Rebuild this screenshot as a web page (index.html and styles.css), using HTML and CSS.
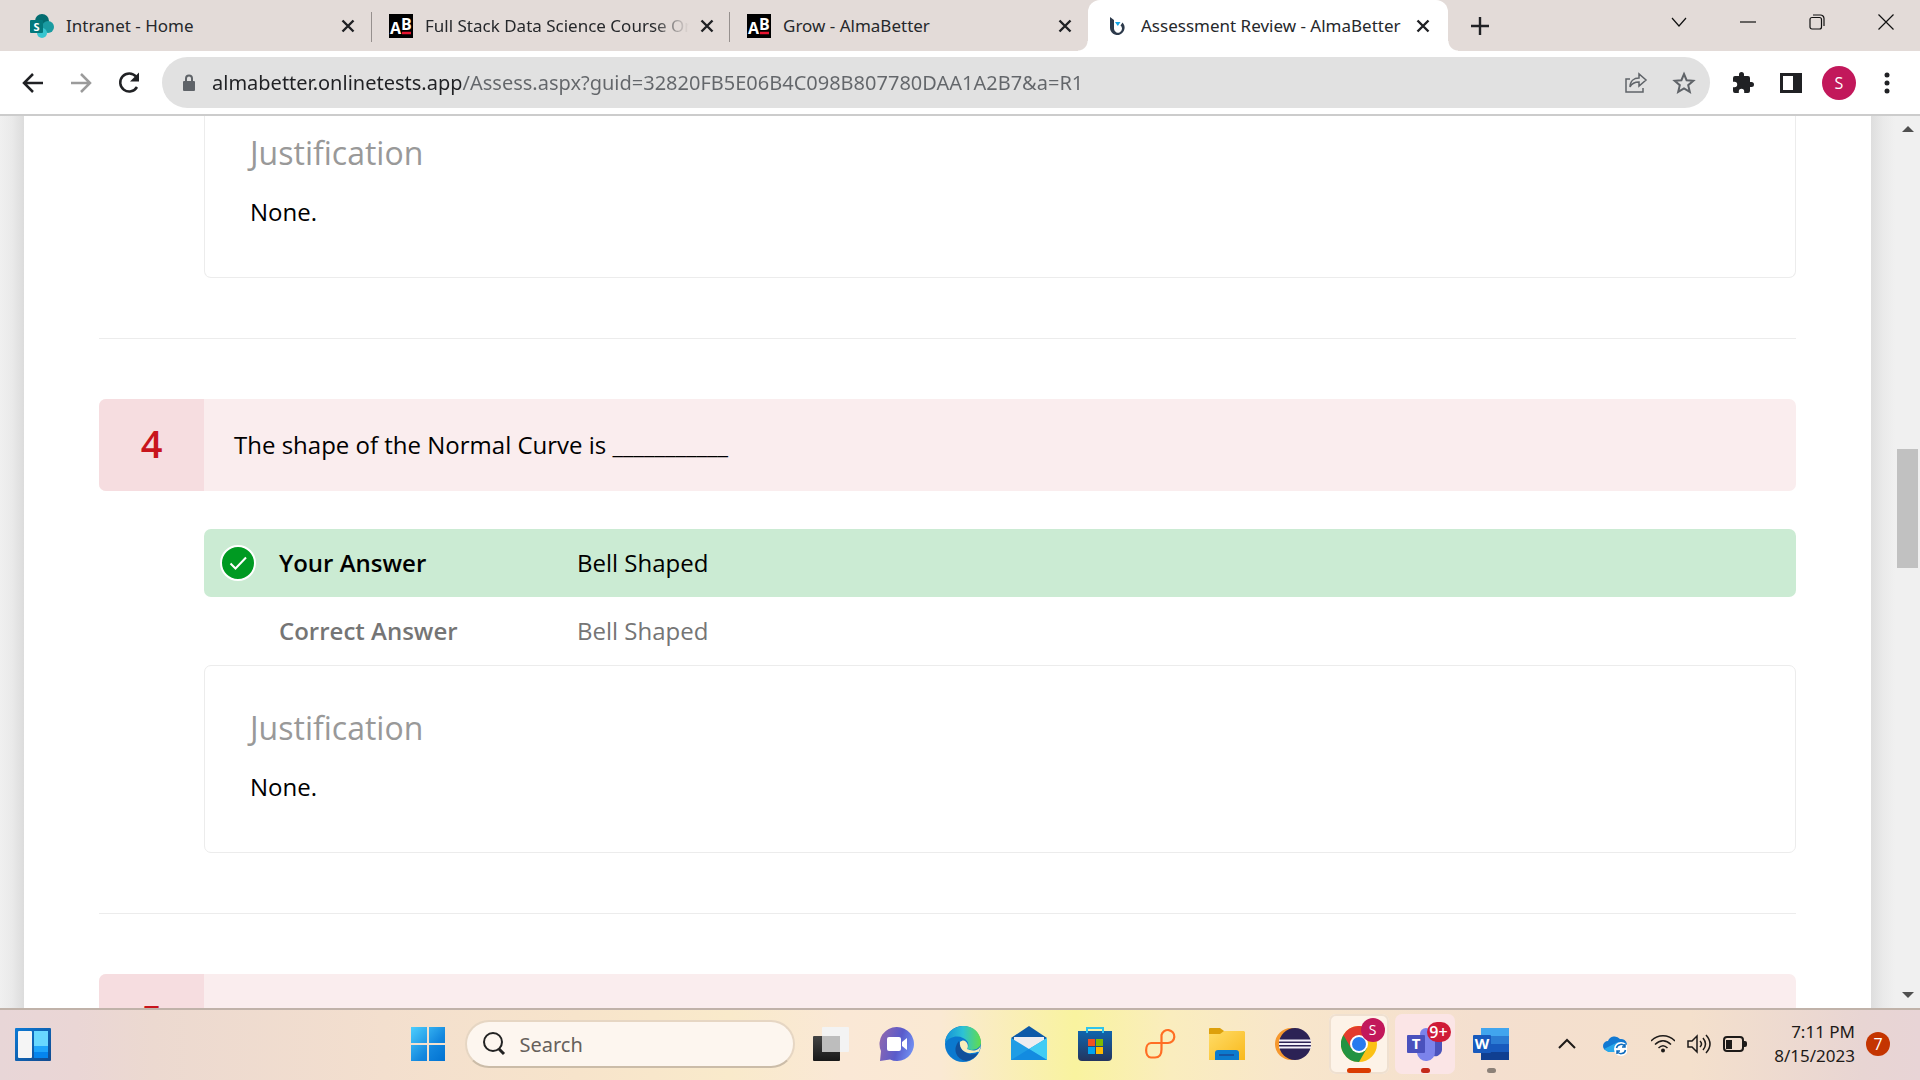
FILE: index.html
```
<!DOCTYPE html>
<html lang="en">
<head>
<meta charset="utf-8">
<title>Assessment Review - AlmaBetter</title>
<link rel="stylesheet" href="styles.css">
</head>
<body>
<div class="desktop">
  <header class="tabstrip">
    <div class="tab">
      <svg class="favicon" viewBox="0 0 24 24"><circle cx="12" cy="7" r="7" fill="#036c70"/><circle cx="18" cy="13" r="6" fill="#1a9ba1"/><circle cx="12" cy="19" r="5" fill="#37c6d0"/><rect y="6" width="13" height="13" rx="1" fill="#03787c"/><text x="6.500" y="16.500" text-anchor="middle" class="glyph glyph-s">S</text></svg>
      <span class="tab-title">Intranet - Home</span>
      <button class="tab-close" aria-label="Close tab"><svg viewBox="0 0 14 14"><path d="M1.500 1.500l11 11M12.500 1.500l-11 11"/></svg></button>
    </div>
    <div class="tab divided">
      <svg class="favicon" viewBox="0 0 24 24"><rect width="24" height="24" fill="#000"/><text x="1" y="20" class="glyph glyph-ab">A</text><text x="12" y="16" class="glyph glyph-ab">B</text><path d="M13 19h9" stroke="#e8132f" stroke-width="2.500"/></svg>
      <span class="tab-title faded">Full Stack Data Science Course Online</span>
      <button class="tab-close" aria-label="Close tab"><svg viewBox="0 0 14 14"><path d="M1.500 1.500l11 11M12.500 1.500l-11 11"/></svg></button>
    </div>
    <div class="tab divided">
      <svg class="favicon" viewBox="0 0 24 24"><rect width="24" height="24" fill="#000"/><text x="1" y="20" class="glyph glyph-ab">A</text><text x="12" y="16" class="glyph glyph-ab">B</text><path d="M13 19h9" stroke="#e8132f" stroke-width="2.500"/></svg>
      <span class="tab-title">Grow - AlmaBetter</span>
      <button class="tab-close" aria-label="Close tab"><svg viewBox="0 0 14 14"><path d="M1.500 1.500l11 11M12.500 1.500l-11 11"/></svg></button>
    </div>
    <div class="tab active">
      <svg class="favicon" viewBox="0 0 24 24"><path d="M5 3l4 3v9a4 4 0 1 0 6.500-3.500l2-3a7.300 7.300 0 1 1-12.500 5z" fill="#2d3a4b"/><path d="M10 8h5.500l-2.700 4z" fill="#12a5e8"/></svg>
      <span class="tab-title">Assessment Review - AlmaBetter</span>
      <button class="tab-close" aria-label="Close tab"><svg viewBox="0 0 14 14"><path d="M1.500 1.500l11 11M12.500 1.500l-11 11"/></svg></button>
    </div>
    <button class="new-tab" aria-label="New tab"><svg viewBox="0 0 18 18"><path d="M9 0v18M0 9h18"/></svg></button>
    <div class="window-buttons">
      <button aria-label="Search tabs"><svg viewBox="0 0 16 16"><path d="M1 4l7 8 7-8"/></svg></button>
      <button aria-label="Minimize"><svg viewBox="0 0 16 16"><path d="M0 8h16"/></svg></button>
      <button aria-label="Restore"><svg viewBox="0 0 16 16"><rect x="1" y="3.500" width="11.500" height="11.500" rx="2"/><path d="M4 1h7.500a3.500 3.500 0 0 1 3.500 3.500v7.500"/></svg></button>
      <button aria-label="Close"><svg viewBox="0 0 16 16"><path d="M.5.5l15 15M15.500.5l-15 15"/></svg></button>
    </div>
  </header>

  <nav class="toolbar">
    <button class="tool" aria-label="Back"><svg viewBox="0 0 24 24"><path d="M22 12H3M12 3l-9 9 9 9" class="line"/></svg></button>
    <button class="tool muted" aria-label="Forward"><svg viewBox="0 0 24 24"><path d="M2 12h19M12 3l9 9-9 9" class="line"/></svg></button>
    <button class="tool" aria-label="Reload"><svg viewBox="0 0 24 24"><path d="M20 16a9 9 0 1 1-1-10.500" class="line"/><path d="M22 1.500v9h-9z"/></svg></button>
    <div class="omnibox">
      <svg class="lock" viewBox="0 0 14 18"><rect x="1" y="7" width="12" height="10" rx="1" fill="#5f6368"/><path d="M4 8V4.500a3 3 0 0 1 6 0V8" fill="none" stroke="#5f6368" stroke-width="2"/></svg>
      <input class="url" type="text" aria-label="Address" value="almabetter.onlinetests.app/Assess.aspx?guid=32820FB5E06B4C098B807780DAA1A2B7&amp;a=R1">
      <button class="tool gray" aria-label="Share"><svg viewBox="0 0 24 24"><path d="M6 8H2v13h17v-4M6 16c0-6 4-9 9-9V3l7 6-7 6v-4c-4 0-7 1-9 5z" class="thin"/></svg></button>
      <button class="tool gray" aria-label="Bookmark"><svg viewBox="0 0 24 24"><path d="M12 3l2.600 6.200 6.700.6-5.100 4.400 1.600 6.600L12 17.300l-5.800 3.500 1.600-6.600-5.100-4.400 6.700-.6z" class="mid"/></svg></button>
    </div>
    <button class="tool" aria-label="Extensions"><svg viewBox="0 0 24 24"><path d="M20.500 11H19V7a2 2 0 0 0-2-2h-4V3.500a2.500 2.500 0 0 0-5 0V5H4a2 2 0 0 0-2 2v3.800h1.500a2.700 2.700 0 0 1 0 5.400H2V20a2 2 0 0 0 2 2h3.800v-1.500a2.700 2.700 0 0 1 5.400 0V22H17a2 2 0 0 0 2-2v-4h1.500a2.500 2.500 0 0 0 0-5z"/></svg></button>
    <button class="tool" aria-label="Side panel"><svg viewBox="0 0 24 24"><path d="M1 2h22v20H1zM4 5v14h10V5z" fill-rule="evenodd"/></svg></button>
    <button class="avatar" aria-label="Profile">S</button>
    <button class="tool" aria-label="Menu"><svg viewBox="0 0 24 24"><circle cx="12" cy="4" r="2.500"/><circle cx="12" cy="12" r="2.500"/><circle cx="12" cy="20" r="2.500"/></svg></button>
  </nav>

  <div class="viewport">
    <div class="gutter left"></div>
    <main class="sheet">
      <section class="question">
        <div class="justification continued">
          <h2>Justification</h2>
          <p>None.</p>
        </div>
      </section>
      <hr>
      <section class="question">
        <div class="prompt">
          <span class="number">4</span>
          <p class="prompt-text">The shape of the Normal Curve is ___________</p>
        </div>
        <dl class="answers">
          <div class="answer correct">
            <svg class="check" viewBox="0 0 36 36"><circle cx="18" cy="18" r="17" fill="#009a22" stroke="#fff" stroke-width="2"/><path d="M10.500 18.500l5 5 10.500-11" fill="none" stroke="#fff" stroke-width="2"/></svg>
            <dt>Your Answer</dt>
            <dd>Bell Shaped</dd>
          </div>
          <div class="answer">
            <dt>Correct Answer</dt>
            <dd>Bell Shaped</dd>
          </div>
        </dl>
        <div class="justification">
          <h2>Justification</h2>
          <p>None.</p>
        </div>
      </section>
      <hr>
      <section class="question">
        <div class="prompt">
          <span class="number">5</span>
          <p class="prompt-text"></p>
        </div>
      </section>
    </main>
    <div class="gutter right"></div>
    <div class="scrollbar">
      <svg class="arrow" viewBox="0 0 12 6"><path d="M0 6l6-6 6 6z"/></svg>
      <div class="track"><div class="thumb"></div></div>
      <svg class="arrow" viewBox="0 0 12 6"><path d="M0 0l6 6 6-6z"/></svg>
    </div>
  </div>

  <footer class="taskbar">
    <div class="task-left">
      <button class="task" aria-label="Widgets"><svg viewBox="0 0 36 36"><defs><linearGradient id="wd" x2="1" y2="1"><stop stop-color="#0b7ad6"/><stop offset="1" stop-color="#124a8e"/></linearGradient></defs><rect y="2" width="36" height="33" rx="1" fill="url(#wd)"/><rect x="3" y="5" width="14" height="27" rx="1" fill="#f5f5f5"/><path d="M19 5h14v15H19z" fill="#68d8ff"/><path d="M19 20h14v6H19z" fill="#1ea5fb"/><path d="M19 26h14v6H19z" fill="#0585ee"/></svg></button>
    </div>
    <div class="task-center">
      <button class="task" aria-label="Start"><svg viewBox="0 0 36 36"><defs><linearGradient id="st" x2="36" y2="36" gradientUnits="userSpaceOnUse"><stop stop-color="#4fd2ff"/><stop offset=".6" stop-color="#1387de"/><stop offset="1" stop-color="#0070d0"/></linearGradient></defs><path d="M1 1h16v16H1zM19 1h16v16H19zM1 19h16v16H1zM19 19h16v16H19z" fill="url(#st)"/></svg></button>
      <label class="search">
        <svg viewBox="0 0 24 24"><circle cx="11" cy="10" r="9" fill="none" stroke="#222" stroke-width="2"/><path d="M17 17l5 5" stroke="#222" stroke-width="3"/></svg>
        <input type="text" placeholder="Search" aria-label="Search">
      </label>
      <button class="task" aria-label="Task view"><svg viewBox="0 0 36 36"><defs><linearGradient id="tv" x2="0" y2="1"><stop stop-color="#444"/><stop offset="1" stop-color="#181818"/></linearGradient></defs><rect y="10" width="27" height="25" rx="1" fill="url(#tv)"/><rect x="9" y="1" width="27" height="25" rx="1" fill="#f3f3f3"/><path d="M9 10h18v16H9z" fill="#bdbdbd"/></svg></button>
      <button class="task" aria-label="Chat"><svg viewBox="0 0 36 36"><defs><linearGradient id="ch" x1="0" x2="1" y1=".2" y2=".5"><stop stop-color="#9168ae"/><stop offset=".6" stop-color="#595bcb"/><stop offset="1" stop-color="#708df0"/></linearGradient></defs><path d="M18 1a17 17 0 1 1-7 32.500L1 35l1-10A17 17 0 0 1 18 1z" fill="url(#ch)"/><rect x="8" y="11" width="14" height="14" rx="2" fill="#fff"/><path d="M23 16l5-4v12l-5-4z" fill="#fff"/></svg></button>
      <button class="task" aria-label="Edge"><svg viewBox="0 0 36 36"><defs><linearGradient id="e1"><stop stop-color="#1591d8"/><stop offset=".5" stop-color="#2dc2d5"/><stop offset="1" stop-color="#62dc4b"/></linearGradient></defs><circle cx="18" cy="18" r="18" fill="#0b79cf"/><path d="M0 17C1-4 34-7 36 16c0 8-10 9-14 7 3-4 1-9-4-11-6-3-14-1-18 5z" fill="url(#e1)"/><path d="M14 15c-7 8-3 18 7 20 6-1 10-4 12-8-8 4-18-1-19-12z" fill="#11509b"/><path d="M15 16c-1 7 5 12 12 11 4 0 5-2 7-1l2-7c-2 7-10 6-14 4 3-4-2-12-7-7z" fill="#f9edbb"/></svg></button>
      <button class="task" aria-label="Mail"><svg viewBox="0 0 36 36"><path d="M0 12L18 0l18 12-18 14z" fill="#0c5aa8"/><path d="M3 11h30v8L18 28 3 19z" fill="#ededf0"/><path d="M0 12l18 11 18-11v22H0z" fill="#1f9de5"/><path d="M36 12v22L18 23z" fill="#40ccf4"/><path d="M0 34l18-11 18 11z" fill="#138be0"/></svg></button>
      <button class="task" aria-label="Store"><svg viewBox="0 0 36 36"><defs><linearGradient id="so" x2="0" y2="1"><stop stop-color="#1065ad"/><stop offset="1" stop-color="#24355e"/></linearGradient></defs><path d="M1 5h34v26a4 4 0 0 1-4 4H5a4 4 0 0 1-4-4z" fill="url(#so)"/><path d="M10 7V2h16v5" fill="none" stroke="#2fc4ec" stroke-width="2"/><path d="M11 13h7v7h-7z" fill="#f25022"/><path d="M19 13h7v7h-7z" fill="#7fba00"/><path d="M11 21h7v7h-7z" fill="#00a4ef"/><path d="M19 21h7v7h-7z" fill="#ffb900"/></svg></button>
      <button class="task" aria-label="Loop"><svg viewBox="0 0 36 36"><path d="M18.500 17V9a6.500 6.500 0 1 1 6.500 8H8c-6.500 0-6.500 14.500 0 14.500h4c5 0 6.500-3 6.500-8z" fill="none" stroke="#ff6e24" stroke-width="2.200"/></svg></button>
      <button class="task" aria-label="File Explorer"><svg viewBox="0 0 36 36"><defs><linearGradient id="fo" x2="1" y2="1"><stop stop-color="#ffdc67"/><stop offset="1" stop-color="#f9b91c"/></linearGradient></defs><path d="M0 3a1 1 0 0 1 1-1h10l4 3v6H0z" fill="#dda00b"/><path d="M0 8h11l4-3h20l1 1v28H0z" fill="url(#fo)"/><path d="M6 34v-7a3 3 0 0 1 3-3h18a3 3 0 0 1 3 3v7z" fill="#0b7bce"/><path d="M10 29h15" stroke="#1556a4" stroke-width="2"/></svg></button>
      <button class="task" aria-label="Eclipse"><svg viewBox="0 0 36 36"><circle cx="16" cy="18" r="16" fill="#f6982e"/><circle cx="20" cy="18" r="16" fill="#2c2255"/><path d="M4 14.500h32M4 18h32M4 21.500h32" stroke="#f4f0fa" stroke-width="1.800"/></svg></button>
      <button class="task lit" aria-label="Chrome"><svg viewBox="0 0 36 36"><circle cx="18" cy="18" r="18" fill="#fbc116"/><path d="M2.400 9A18 18 0 0 0 18 36l8-14-8-4z" fill="#229342"/><path d="M2.400 9L10 22l6-12h18.600l-1-1A18 18 0 0 0 2.400 9z" fill="#e33b2e"/><circle cx="18" cy="18" r="9" fill="#fff"/><circle cx="18" cy="18" r="7" fill="#287bef"/></svg><span class="badge profile">S</span><span class="run wide"></span></button>
      <button class="task alert" aria-label="Teams"><svg viewBox="0 0 36 36"><circle cx="19" cy="8" r="6" fill="#7b83eb"/><path d="M24 14h11v10a7 7 0 0 1-11 5z" fill="#4b53bc"/><path d="M10 13h18v12a9 9 0 0 1-18 2z" fill="#7b83eb"/><rect y="9" width="18" height="18" rx="1" fill="#4a51bd"/><text x="9" y="23" text-anchor="middle" class="glyph glyph-app">T</text></svg><span class="badge count">9+</span><span class="run red"></span></button>
      <button class="task" aria-label="Word"><svg viewBox="0 0 36 36"><path d="M8 2h28v8H8z" fill="#41a5ee"/><path d="M8 10h28v8H8z" fill="#2b7cd3"/><path d="M8 18h28v8H8z" fill="#185abd"/><path d="M8 26h28v8H8z" fill="#103f91"/><rect y="9" width="18" height="18" rx="1" fill="#185abd"/><text x="9" y="23" text-anchor="middle" class="glyph glyph-app">W</text></svg><span class="run"></span></button>
    </div>
    <div class="task-right">
      <button class="tray" aria-label="Hidden icons"><svg viewBox="0 0 24 24"><path d="M4 16l8-8 8 8" class="mid"/></svg></button>
      <button class="tray cloud" aria-label="OneDrive"><svg viewBox="0 0 24 24"><path d="M5 19a5 5 0 0 1 0-10 7 7 0 0 1 12-2 6 6 0 0 1 2 12z" fill="#1279d2"/><path d="M1 17l14-7 7 7-2 3H5z" fill="#28a8ea"/><circle cx="18" cy="17" r="7" fill="#fff"/><path d="M13.500 16a4.500 4.500 0 0 1 8.500-1M22.500 18a4.500 4.500 0 0 1-8.500 1M22 12v3h-3M14 22v-3h3" fill="none" stroke="#0f6cbd" stroke-width="1.500"/></svg></button>
      <button class="tray" aria-label="Wi-Fi"><svg viewBox="0 0 24 24"><path d="M0 9c7-7 17-7 24 0M4 12.500c5-5 11-5 16 0M7.500 16c3-3 6-3 9 0" class="thin"/><circle cx="12" cy="18.500" r="2"/></svg></button>
      <button class="tray" aria-label="Volume"><svg viewBox="0 0 24 24"><path d="M1 9h4l5-5v16l-5-5H1zM13 9q3 3 0 6M16 6q5 6 0 12M19 3q8 9 0 18" class="thin"/></svg></button>
      <button class="tray" aria-label="Battery"><svg viewBox="0 0 24 24"><rect x="1" y="5" width="19" height="14" rx="3" class="mid"/><path d="M3 8h6v9H3zM21 9h1a2 2 0 0 1 2 2v2a2 2 0 0 1-2 2h-1z"/></svg></button>
      <div class="clock"><span>7:11 PM</span><span>8/15/2023</span></div>
      <button class="notices" aria-label="Notifications">7</button>
    </div>
  </footer>
</div>
</body>
</html>
```
FILE: styles.css
```
* { box-sizing: border-box; }
body {
  margin: 0;
  font-family: "Open Sans", "Noto Sans", sans-serif;
  color: #000;
}
h2, p, dl, dd { margin: 0; }
button {
  padding: 0;
  border: 0;
  background: none;
  font: inherit;
  color: inherit;
}
svg { display: block; flex: none; }
.desktop {
  display: flex;
  flex-direction: column;
  height: 100vh;
  overflow: hidden;
}

/* Icon strokes */
.line, .thin, .mid { fill: none; stroke: currentColor; }
.line { stroke-width: 2.5; }
.mid { stroke-width: 2; }
.thin { stroke-width: 1.5; }
.glyph { fill: #fff; font-family: "Open Sans", sans-serif; font-weight: 700; }
.glyph-s { font-size: 11px; }
.glyph-ab { font-size: 16px; }
.glyph-app { font-size: 15px; }

/* Tab strip */
.tabstrip {
  display: flex;
  height: 51px;
  flex: none;
  padding-left: 14px;
  background: #e3dbd8;
}
.tab {
  position: relative;
  display: flex;
  align-items: center;
  flex: 0 1 358px;
  min-width: 0;
  padding: 0 10px 0 16px;
  font-family: "Noto Sans", sans-serif;
  font-size: 17px;
  color: #26282b;
}
.divided { padding-right: 9px; padding-left: 17px; }
.divided::before {
  content: "";
  position: absolute;
  left: -1px;
  top: 12px;
  width: 1px;
  height: 30px;
  background: #96908e;
}
.favicon { width: 24px; height: 24px; }
.tab-title {
  flex: 1;
  min-width: 0;
  margin-left: 12px;
  overflow: hidden;
  white-space: nowrap;
}
.faded {
  -webkit-mask-image: linear-gradient(to left, transparent, #000 36px);
  mask-image: linear-gradient(to left, transparent, #000 36px);
}
.tab-close {
  display: flex;
  align-items: center;
  justify-content: center;
  width: 28px;
  height: 28px;
  margin-left: 4px;
}
.tab-close svg { width: 14px; height: 14px; }
.tab-close path, .new-tab path { fill: none; stroke: #202124; stroke-width: 2.4; }
.active {
  flex-basis: 360px;
  background: #fff;
  border-radius: 12px 12px 0 0;
  padding-right: 11px;
  padding-left: 17px;
}
.active::before, .active::after {
  content: "";
  position: absolute;
  bottom: 0;
  width: 10px;
  height: 10px;
}
.active::before { left: -10px; background: radial-gradient(circle at 0 0, transparent 9px, #fff 10px); }
.active::after { right: -10px; background: radial-gradient(circle at 100% 0, transparent 9px, #fff 10px); }
.new-tab {
  display: flex;
  align-items: center;
  justify-content: center;
  width: 44px;
  margin-left: 10px;
}
.new-tab svg { width: 18px; height: 18px; }
.window-buttons { display: flex; height: 44px; margin-left: auto; }
.window-buttons button {
  display: flex;
  align-items: center;
  justify-content: center;
  width: 69px;
}
.window-buttons svg { width: 16px; height: 16px; fill: none; stroke: #111; stroke-width: 1.2; }

/* Toolbar */
.toolbar {
  display: flex;
  align-items: center;
  flex: none;
  height: 65px;
  padding: 0 9px;
  background: #fff;
  border-bottom: 2px solid #ccc;
}
.tool {
  display: flex;
  align-items: center;
  justify-content: center;
  width: 48px;
  height: 48px;
  color: #202124;
}
.tool svg { width: 24px; height: 24px; fill: currentColor; }
.muted { color: #9b9b9b; }
.gray { color: #5f6368; }
.omnibox {
  display: flex;
  align-items: center;
  flex: 1;
  min-width: 0;
  height: 51px;
  margin: 0 9px;
  padding: 0 2px 0 20px;
  border-radius: 26px;
  background: #e1e1e1;
}
.lock { width: 14px; height: 18px; }
.url {
  flex: 1;
  min-width: 0;
  height: 36px;
  margin: 0 16px;
  padding: 0;
  border: 0;
  outline: 0;
  font-family: "Noto Sans", sans-serif;
  font-size: 20px;
  color: transparent;
  background: linear-gradient(to right, #202124 249px, #63666a 249px);
  -webkit-background-clip: text;
  background-clip: text;
}
.avatar {
  width: 34px;
  height: 34px;
  margin: 0 7px;
  border-radius: 50%;
  background: #c2185b;
  color: #fff;
  font-size: 16px;
}

/* Page */
.viewport {
  display: flex;
  flex: 1;
  min-height: 0;
  overflow: hidden;
  background: #f0f0f0;
}
.gutter { width: 24px; flex: none; }
.left { background: linear-gradient(to right, #f0f0f0, #eaeaea 50%, #dcdcdc); }
.right { background: linear-gradient(to left, #f0f0f0, #eaeaea 50%, #dedede); }
.sheet {
  flex: 1;
  min-width: 0;
  padding: 0 75px;
  background: #fff;
}
hr {
  height: 1px;
  margin: 60px 0;
  border: 0;
  background: #ececec;
}
.prompt {
  display: flex;
  min-height: 92px;
  margin-bottom: 38px;
  border-radius: 7px;
  overflow: hidden;
  background: #faedee;
}
.number {
  display: flex;
  align-items: center;
  justify-content: center;
  width: 105px;
  padding-bottom: 4px;
  background: #f6dde0;
  color: #c8141c;
  font-size: 38px;
  font-weight: 600;
}
.prompt-text { align-self: center; padding: 0 0 2px 30px; font-size: 24px; }
.answers, .justification { margin-left: 105px; }
.answer {
  display: flex;
  align-items: center;
  height: 68px;
  padding-left: 75px;
  border-radius: 7px;
  font-size: 24px;
  color: #757575;
}
.correct { padding-left: 16px; background: #cbebd3; color: #000; }
.check { width: 36px; height: 36px; margin-right: 23px; }
dt { width: 298px; font-weight: 600; }
dt, dd { padding-bottom: 2px; }
.justification {
  height: 188px;
  padding: 40px 45px;
  border: 1px solid #ececec;
  border-radius: 7px;
}
.justification h2 {
  margin-bottom: 20px;
  font-size: 32px;
  font-weight: 400;
  line-height: 44px;
  color: #999;
}
.justification p { font-size: 24px; line-height: 34px; }
.continued {
  height: 162px;
  padding-top: 15px;
  border-top: 0;
  border-radius: 0 0 7px 7px;
}
.scrollbar {
  display: flex;
  flex-direction: column;
  align-items: center;
  width: 25px;
  padding: 10px 0;
}
.arrow { width: 12px; height: 6px; fill: #505050; }
.track { flex: 1; width: 21px; }
.thumb { height: 119px; margin-top: 317px; background: #c1c1c1; }

/* Taskbar */
.taskbar {
  display: grid;
  grid-template-columns: 1fr auto 1fr;
  align-items: center;
  flex: none;
  height: 72px;
  padding-bottom: 2px;
  border-top: 2px solid #c0b2a9;
  background: linear-gradient(to right, #e8d6d7, #ead6d5 4%, #ecd9d0 8%, #f3dfce 20%, #f7e4cb 30%, #f9eacb 38%, #fae8d6 44%, #fae9d3 49%, #f9f39f 56%, #faedbe 61%, #f8e6cb 67%, #f4dfcf 77%, #f4e0cc 88%, #e8d5d3 97%, #e8d4d6);
}
.task-left { padding-left: 3px; }
.task-center { display: flex; gap: 6px; padding-right: 2px; }
.task {
  position: relative;
  display: flex;
  align-items: center;
  justify-content: center;
  width: 60px;
  height: 60px;
  border-radius: 7px;
}
.task svg { width: 36px; height: 36px; }
.lit { background: #fdf3e8; box-shadow: inset 0 0 0 2px #efe0d0; }
.alert { background: #fbe5e6; }
.run {
  position: absolute;
  left: 50%;
  bottom: 1px;
  width: 9px;
  height: 5px;
  margin-left: -4px;
  border-radius: 3px;
  background: #8c8178;
}
.red { background: #c42b1c; }
.wide { width: 24px; margin-left: -12px; background: #da3b01; }
.badge {
  position: absolute;
  right: 4px;
  top: 4px;
  height: 24px;
  border-radius: 12px;
  color: #fff;
  font-size: 14px;
  line-height: 24px;
}
.profile { width: 24px; background: #c2185b; }
.count { top: 8px; height: 20px; width: 24px; background: #cf1b37; font-size: 16px; line-height: 20px; font-weight: 600; }
.search {
  display: flex;
  align-items: center;
  width: 330px;
  height: 48px;
  margin: 6px 0 6px 1px;
  padding-left: 15px;
  border: 2px solid #e6d6c3;
  border-bottom-color: #cbbca8;
  border-radius: 24px;
  background: #fdf6ef;
}
.search svg { width: 24px; height: 24px; }
.search input {
  width: 200px;
  margin-left: 14px;
  padding: 0;
  border: 0;
  outline: 0;
  background: none;
  font-family: "Noto Sans", sans-serif;
  font-size: 20px;
}
.search input::placeholder { color: #66605b; opacity: 1; }
.task-right {
  display: flex;
  align-items: center;
  justify-content: flex-end;
  padding-right: 30px;
}
.tray {
  display: flex;
  align-items: center;
  justify-content: center;
  width: 36px;
  height: 48px;
  color: #1d1a18;
}
.tray svg { width: 24px; height: 24px; fill: currentColor; }
.cloud { margin: 0 12px; }
.clock {
  display: flex;
  flex-direction: column;
  width: 102px;
  text-align: right;
  font-family: "Noto Sans", sans-serif;
  font-size: 17px;
  line-height: 24px;
  color: #1d1a18;
}
.notices {
  width: 24px;
  height: 24px;
  margin-left: 11px;
  border-radius: 50%;
  background: #c43501;
  color: #fff;
  font-size: 16px;
  line-height: 24px;
}
```
